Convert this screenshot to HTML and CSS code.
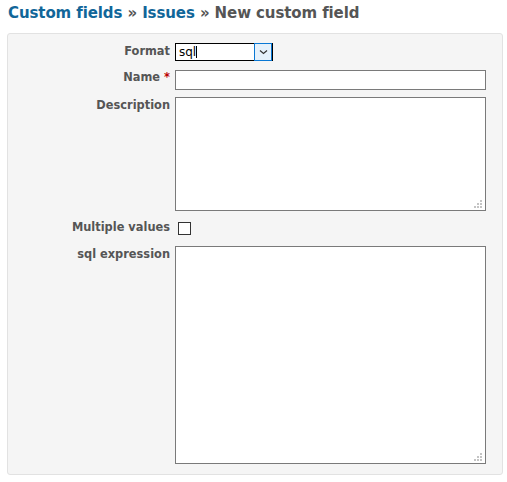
FILE: index.html
```html
<!DOCTYPE html>
<html>
<head>
<meta charset="utf-8">
<link rel="stylesheet" href="styles.css">
</head>
<body>
<h2 class="title"><a href="#">Custom fields</a> &raquo; <a href="#">Issues</a> &raquo; New custom field</h2>
<div class="box">
  <div class="row row-format">
    <label class="lbl">Format</label>
    <div class="select">
      <span class="select-text">sql</span><span class="caret"></span>
      <span class="select-btn"><svg width="9" height="6" viewBox="0 0 9 6"><path d="M1 1.5 L4.5 4.5 L8 1.5" fill="none" stroke="#333" stroke-width="1.2"/></svg></span>
    </div>
  </div>
  <div class="row row-name">
    <label class="lbl">Name <span class="req">*</span></label>
    <input class="text" type="text">
  </div>
  <div class="row row-desc">
    <label class="lbl">Description</label>
    <div class="ta-wrap ta-desc">
      <textarea class="ta"></textarea>
      <svg class="grip" width="8" height="8" viewBox="0 0 8 8"><rect x="6" y="0" width="2" height="2"/><rect x="3" y="3" width="2" height="2"/><rect x="6" y="3" width="2" height="2"/><rect x="0" y="6" width="2" height="2"/><rect x="3" y="6" width="2" height="2"/><rect x="6" y="6" width="2" height="2"/></svg>
    </div>
  </div>
  <div class="row row-multi">
    <label class="lbl">Multiple values</label>
    <span class="check"></span>
  </div>
  <div class="row row-sql">
    <label class="lbl">sql expression</label>
    <div class="ta-wrap ta-sql">
      <textarea class="ta"></textarea>
      <svg class="grip" width="8" height="8" viewBox="0 0 8 8"><rect x="6" y="0" width="2" height="2"/><rect x="3" y="3" width="2" height="2"/><rect x="6" y="3" width="2" height="2"/><rect x="0" y="6" width="2" height="2"/><rect x="3" y="6" width="2" height="2"/><rect x="6" y="6" width="2" height="2"/></svg>
    </div>
  </div>
</div>
</body>
</html>
```
FILE: styles.css
```css
html, body {
  margin: 0;
  padding: 0;
  background: #fff;
}
body {
  font-family: "DejaVu Sans", Verdana, sans-serif;
  font-size: 11px;
  color: #555;
  padding: 0 5px 0 7px;
}
.title {
  margin: 0;
  padding: 3px 0 0 1px;
  height: 30px;
  font-size: 15px;
  font-weight: bold;
  color: #555;
  line-height: 20px;
  letter-spacing: -0.1px;
}
.title a {
  color: #169;
  text-decoration: none;
}
.box {
  width: 494px;
  height: 440px;
  box-sizing: content-box;
  background: #f5f5f5;
  border: 1px solid #e2e2e2;
  border-radius: 3px;
  padding: 0;
}
.row {
  display: flex;
  align-items: flex-start;
}
.lbl {
  width: 162px;
  text-align: right;
  font-weight: bold;
  font-size: 11.4px;
  color: #555;
  padding-right: 5px;
  box-sizing: content-box;
  flex: none;
  line-height: 14px;
}
.req {
  color: #bb0000;
}
.row-format {
  margin-top: 9px;
  height: 18px;
}
.row-format .lbl {
  padding-top: 1px;
}
.select {
  width: 96px;
  height: 16px;
  border: 1px solid #000;
  background: #fff;
  position: relative;
  display: flex;
  align-items: center;
}
.select-text {
  color: #000;
  font-family: "DejaVu Sans", sans-serif;
  font-size: 12px;
  padding-left: 3px;
}
.caret {
  display: inline-block;
  width: 1px;
  height: 12px;
  background: #000;
  margin-left: 0;
}
.select-btn {
  position: absolute;
  right: 0;
  top: -1px;
  width: 16px;
  height: 16px;
  border: 1px solid #0a78d4;
  background: #e5f1fb;
  display: flex;
  align-items: center;
  justify-content: center;
}
.row-name {
  margin-top: 9px;
  height: 20px;
}
.text {
  width: 311px;
  height: 20px;
  box-sizing: border-box;
  border: 1px solid #7a7a7a;
  margin: 0;
  padding: 0;
  background: #fff;
}
.row-desc {
  margin-top: 7px;
}
.row-desc .lbl {
  padding-top: 1px;
}
.ta-wrap {
  position: relative;
  width: 311px;
}
.ta {
  display: block;
  width: 311px;
  height: 100%;
  box-sizing: border-box;
  border: 1px solid #7a7a7a;
  margin: 0;
  padding: 0;
  resize: none;
  background: #fff;
}
.ta-desc {
  height: 114px;
}
.ta-sql {
  height: 218px;
}
.grip {
  position: absolute;
  right: 4px;
  bottom: 3px;
  fill: #c4c4c4;
}
.row-multi {
  margin-top: 11px;
  height: 13px;
}
.row-multi .lbl {
  line-height: 13px;
  margin-top: -1px;
}
.check {
  display: block;
  width: 11px;
  height: 11px;
  border: 1px solid #333;
  background: #fff;
  margin-left: 3px;
}
.row-sql {
  margin-top: 11px;
}
.row-sql .lbl {
  padding-top: 1px;
}
```
